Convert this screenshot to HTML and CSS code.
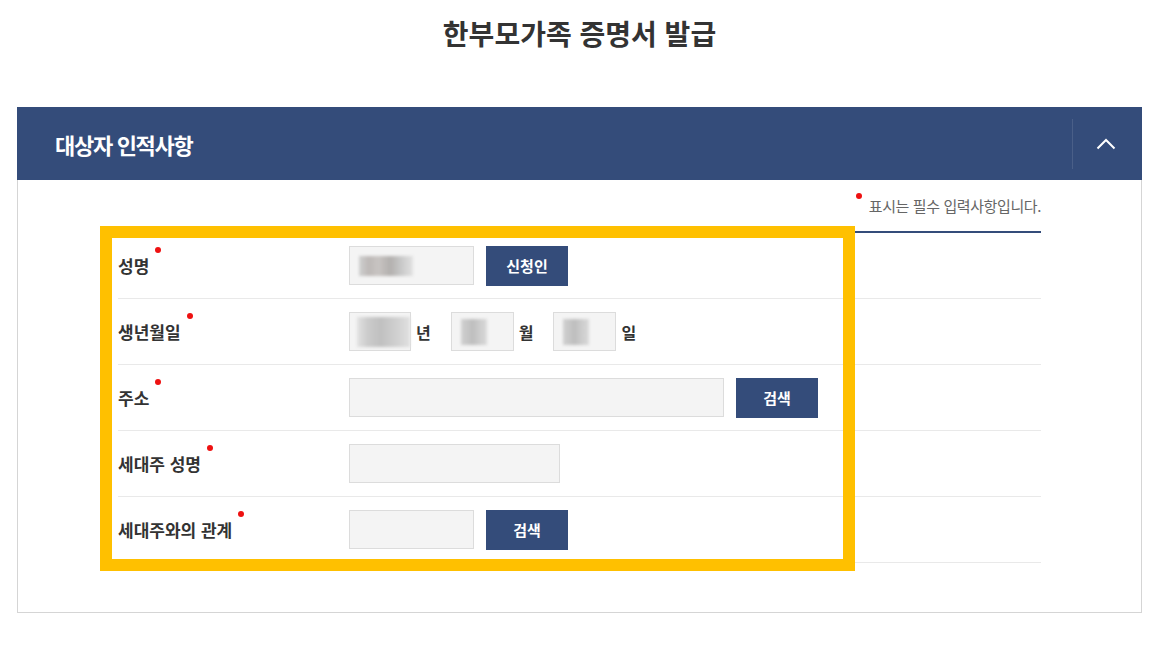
FILE: index.html
```html
<!DOCTYPE html>
<html lang="ko">
<head>
<meta charset="utf-8">
<title>한부모가족 증명서 발급</title>
<link rel="stylesheet" href="styles.css">
</head>
<body>
<div class="page">
  <h1 class="title">한부모가족 증명서 발급</h1>
  <section class="panel">
    <div class="panel-head">
      <h2 class="panel-title">대상자 인적사항</h2>
      <button class="toggle" type="button" aria-label="접기">
        <svg width="20" height="12" viewBox="0 0 20 12"><polyline points="1.5,10.5 10,2 18.5,10.5" fill="none" stroke="#fff" stroke-width="2"/></svg>
      </button>
    </div>
    <div class="panel-body">
      <p class="req-note"><span class="note-dot"></span>표시는 필수 입력사항입니다.</p>
      <div class="form-table">
        <div class="row">
          <div class="label"><span class="req">성명</span></div>
          <div class="cell">
            <span class="field w125"><span class="blur blur-name"></span></span>
            <button class="btn" type="button">신청인</button>
          </div>
        </div>
        <div class="row">
          <div class="label"><span class="req">생년월일</span></div>
          <div class="cell">
            <span class="field w62"><span class="blur blur-year"></span></span><span class="unit">년</span>
            <span class="field w63"><span class="blur blur-md"></span></span><span class="unit">월</span>
            <span class="field w63"><span class="blur blur-md"></span></span><span class="unit">일</span>
          </div>
        </div>
        <div class="row">
          <div class="label"><span class="req">주소</span></div>
          <div class="cell">
            <span class="field w375"></span>
            <button class="btn" type="button">검색</button>
          </div>
        </div>
        <div class="row">
          <div class="label"><span class="req">세대주 성명</span></div>
          <div class="cell">
            <span class="field w211"></span>
          </div>
        </div>
        <div class="row">
          <div class="label"><span class="req">세대주와의 관계</span></div>
          <div class="cell">
            <span class="field w125"></span>
            <button class="btn" type="button">검색</button>
          </div>
        </div>
      </div>
    </div>
  </section>
  <div class="highlight"></div>
</div>
</body>
</html>
```

FILE: styles.css
```css
* { box-sizing: border-box; }

body {
  margin: 0;
  background: #fff;
  color: #333;
  font-family: "Noto Sans CJK KR", "Noto Sans", sans-serif;
}

.page {
  position: relative;
  width: 1168px;
  height: 650px;
}

.title {
  margin: 0 0 0 17px;
  width: 1125px;
  height: 107px;
  padding-top: 12px;
  text-align: center;
  font-size: 28px;
  line-height: 42px;
  font-weight: 700;
  letter-spacing: 0;
  color: #333;
}

.panel {
  margin-left: 17px;
  width: 1125px;
}

.panel-head {
  height: 73px;
  background: #344c7a;
  display: flex;
  align-items: center;
}

.panel-title {
  flex: 1;
  margin: 0;
  padding-left: 38px;
  color: #fff;
  font-size: 22px;
  font-weight: 700;
  letter-spacing: -1.3px;
  line-height: 30px;
}

.toggle {
  width: 70px;
  height: 50px;
  padding: 0 4px 0 0;
  border: 0;
  border-left: 1px solid #4a5f88;
  background: transparent;
  display: flex;
  align-items: center;
  justify-content: center;
}

.panel-body {
  border: 1px solid #d5d5d5;
  border-top: 0;
  padding: 16px 100px 49px;
}

.req-note {
  margin: 0 0 15px;
  text-align: right;
  font-size: 15px;
  line-height: 20px;
  letter-spacing: -0.4px;
  color: #666;
}

.note-dot {
  display: inline-block;
  width: 6px;
  height: 6px;
  border-radius: 50%;
  background: #ee1111;
  vertical-align: top;
  margin: -3px 7px 0 0;
}

.form-table {
  border-top: 2px solid #344c7a;
}

.row {
  display: flex;
  align-items: center;
  height: 66px;
  border-bottom: 1px solid #e9e9e9;
}

.label {
  width: 231px;
  flex: none;
  font-size: 17px;
  font-weight: 700;
  letter-spacing: 0;
  color: #333;
}

.req {
  position: relative;
  display: inline-block;
  line-height: 22px;
}

.req::after {
  content: "";
  position: absolute;
  right: -12px;
  top: -8px;
  width: 6px;
  height: 6px;
  border-radius: 50%;
  background: #ee1111;
}

.cell {
  display: flex;
  align-items: center;
}

.field {
  display: flex;
  align-items: center;
  height: 39px;
  background: #f4f4f4;
  border: 1px solid #dcdcdc;
}

.w62 { width: 62px; }
.w63 { width: 63px; }
.w125 { width: 125px; }
.w211 { width: 211px; }
.w375 { width: 375px; }

.blur {
  display: block;
  filter: blur(1.5px);
}

.blur-name {
  margin-left: 9px;
  width: 54px;
  height: 20px;
  background: linear-gradient(90deg, #d0d0d0 0%, #bdb9b7 18%, #c8c4c2 36%, #b3b0ae 58%, #c6c6c6 76%, #e2e2e2 100%);
}

.blur-year {
  margin-left: 7px;
  width: 54px;
  height: 30px;
  background: linear-gradient(90deg, #e2e2e2 0%, #cbcbcb 20%, #c0c0c0 45%, #cdcdcd 70%, #e0e0e0 100%);
}

.blur-md {
  margin-left: 9px;
  width: 26px;
  height: 26px;
  background: linear-gradient(90deg, #d0d0d0 0%, #bebebe 45%, #dadada 100%);
}

.unit {
  margin: 0 20px 0 5px;
  font-size: 16px;
  font-weight: 700;
  color: #333;
  line-height: 22px;
}

.btn {
  margin-left: 12px;
  width: 82px;
  height: 40px;
  border: 0;
  background: #344c7a;
  color: #fff;
  font-family: "Noto Sans CJK KR", "Noto Sans", sans-serif;
  font-size: 15px;
  font-weight: 700;
  letter-spacing: 0;
  padding: 0;
}

.highlight {
  position: absolute;
  left: 100px;
  top: 226px;
  width: 755px;
  height: 345px;
  border: 12px solid #ffc000;
  pointer-events: none;
}
```
